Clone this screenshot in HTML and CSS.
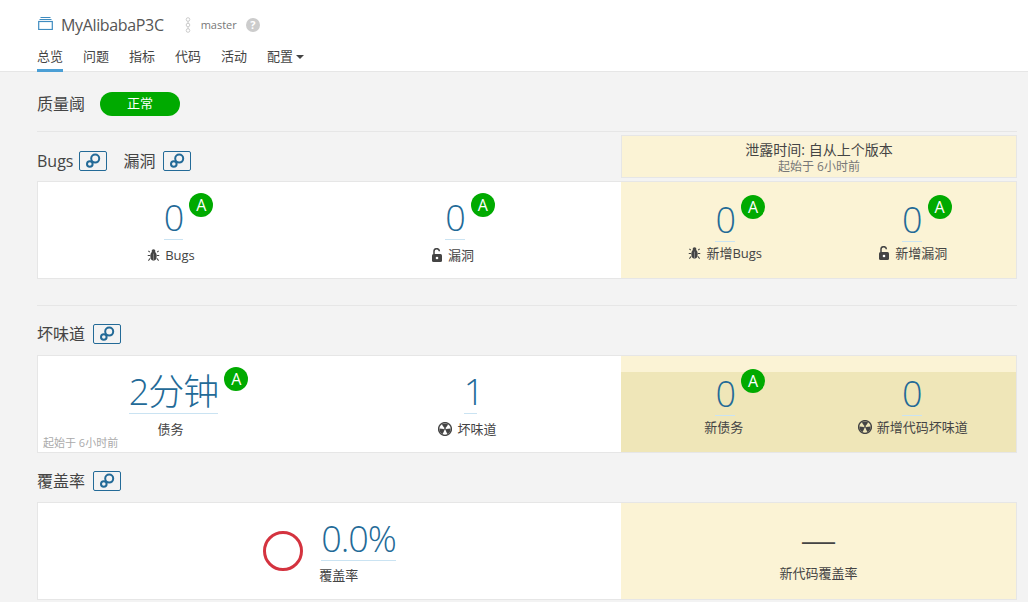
FILE: index.html
```
<!DOCTYPE html>
<html lang="zh">
<head>
<meta charset="utf-8">
<title>MyAlibabaP3C</title>
<link rel="stylesheet" href="styles.css">
</head>
<body>
<svg class="defs" width="0" height="0">
  <symbol id="i-link" viewBox="0 0 16 16"><circle cx="4.8" cy="11" r="2.8" fill="none" stroke="#236a97" stroke-width="2"/><circle cx="10.2" cy="5.6" r="4" fill="none" stroke="#236a97" stroke-width="2"/></symbol>
  <symbol id="i-bug" viewBox="0 0 14 14"><ellipse cx="7" cy="8.2" rx="3.4" ry="5" fill="#444"/><circle cx="7" cy="2.8" r="2" fill="#444"/><path d="M3 4 1.5 2.5M11 4l1.500-1.500M3.500 7.500H.8M10.500 7.500h2.700M3.500 10.500 1.500 13M10.500 10.500l2 2.500M7 5v8" stroke="#444" stroke-width="1.100" fill="none"/><path d="M7 5.500v8" stroke="#fff" stroke-width=".6" opacity=".6"/></symbol>
  <symbol id="i-lock" viewBox="0 0 12 14"><rect x="1" y="6" width="10" height="8" rx="1.500" fill="#444"/><path d="M3 6V3.600a2.700 2.700 0 0 1 5.400-.4" fill="none" stroke="#444" stroke-width="1.500"/><circle cx="6" cy="10" r="1.300" fill="#fff"/></symbol>
  <symbol id="i-rad" viewBox="0 0 14 14"><circle cx="7" cy="7" r="6.400" fill="none" stroke="#444" stroke-width="1.400"/><circle cx="7" cy="7" r="3.400" fill="none" stroke="#444" stroke-width="4.400" pathLength="360" stroke-dasharray="70 50" stroke-dashoffset="-235"/><circle cx="7" cy="7" r="1" fill="#444"/></symbol>
</svg>
<header class="topbar">
  <div class="project">
    <svg class="book" width="15" height="14" viewBox="0 0 15 14"><path d="M2.500 1.500h10M1.500 3.500h12" stroke="#3f8cc0" stroke-width="1" fill="none"/><rect x=".7" y="5.500" width="13.600" height="8" fill="none" stroke="#3f8cc0" stroke-width="1.200"/></svg>
    <span class="project-name">MyAlibabaP3C</span>
    <svg class="branch" width="6" height="16" viewBox="0 0 6 16"><path d="M3 4v3M3 10v2" stroke="#ccc"/><circle cx="3" cy="2.500" r="1.800" fill="none" stroke="#ccc"/><circle cx="3" cy="8" r="1.800" fill="none" stroke="#ccc"/><circle cx="3" cy="13.500" r="1.800" fill="none" stroke="#ccc"/></svg>
    <span class="branch-name">master</span>
    <span class="help">?</span>
  </div>
  <nav class="tabs">
    <a class="tab active">总览</a>
    <a class="tab">问题</a>
    <a class="tab">指标</a>
    <a class="tab">代码</a>
    <a class="tab">活动</a>
    <a class="tab">配置<span class="caret"></span></a>
  </nav>
</header>
<main class="page">
  <div class="gate">
    <h2 class="title">质量阈</h2>
    <span class="gate-ok">正常</span>
  </div>

  <section class="first">
    <div class="head-row">
      <div class="heads">
        <h2 class="title">Bugs</h2><a class="link-btn"><svg width="16" height="16"><use href="#i-link"/></svg></a>
        <h2 class="title second-title">漏洞</h2><a class="link-btn"><svg width="16" height="16"><use href="#i-link"/></svg></a>
      </div>
      <div class="leak-box">
        <div class="leak-main">泄露时间: 自从上个版本</div>
        <div class="leak-sub">起始于 6小时前</div>
      </div>
    </div>
    <div class="card">
      <div class="left cols-a">
        <div class="metric">
          <div class="value">0<span class="badge">A</span></div>
          <div class="label"><svg class="ic" width="13" height="14"><use href="#i-bug"/></svg>Bugs</div>
        </div>
        <div class="metric">
          <div class="value">0<span class="badge">A</span></div>
          <div class="label"><svg class="ic" width="12" height="14"><use href="#i-lock"/></svg>漏洞</div>
        </div>
      </div>
      <div class="right">
        <div class="metric">
          <div class="value">0<span class="badge">A</span></div>
          <div class="label"><svg class="ic" width="13" height="14"><use href="#i-bug"/></svg>新增Bugs</div>
        </div>
        <div class="metric">
          <div class="value">0<span class="badge">A</span></div>
          <div class="label"><svg class="ic" width="12" height="14"><use href="#i-lock"/></svg>新增漏洞</div>
        </div>
      </div>
    </div>
  </section>

  <section class="smells">
    <div class="sec-head">
      <h2 class="title">坏味道</h2><a class="link-btn"><svg width="16" height="16"><use href="#i-link"/></svg></a>
    </div>
    <div class="card">
      <div class="left cols-b">
        <div class="metric">
          <div class="value">2分钟<span class="badge">A</span></div>
          <div class="label">债务</div>
        </div>
        <div class="metric">
          <div class="value value-one">1</div>
          <div class="label"><svg class="ic" width="14" height="14"><use href="#i-rad"/></svg>坏味道</div>
        </div>
        <span class="since">起始于 6小时前</span>
      </div>
      <div class="right band">
        <div class="band-inner">
          <div class="metric">
            <div class="value">0<span class="badge">A</span></div>
            <div class="label label-shift">新债务</div>
          </div>
          <div class="metric">
            <div class="value">0</div>
            <div class="label"><svg class="ic" width="14" height="14"><use href="#i-rad"/></svg>新增代码坏味道</div>
          </div>
        </div>
      </div>
    </div>
  </section>

  <section class="coverage">
    <div class="sec-head">
      <h2 class="title">覆盖率</h2><a class="link-btn"><svg width="16" height="16"><use href="#i-link"/></svg></a>
    </div>
    <div class="card">
      <div class="left cov">
        <svg class="donut" width="40" height="40" viewBox="0 0 40 40"><circle cx="20" cy="20" r="18.500" fill="none" stroke="#d4333f" stroke-width="3"/></svg>
        <div class="metric cov-metric">
          <div class="value">0.0%</div>
          <div class="label">覆盖率</div>
        </div>
      </div>
      <div class="right cov-right">
        <div class="metric">
          <div class="dash">—</div>
          <div class="label">新代码覆盖率</div>
        </div>
      </div>
    </div>
  </section>
</main>
</body>
</html>
```
FILE: styles.css
```
* { box-sizing: border-box; }
html, body { margin: 0; height: 602px; overflow: hidden; }
body {
  background: #f3f3f3;
  color: #444;
  font-family: "Open Sans", "Noto Sans CJK SC", sans-serif;
  font-size: 13px;
}
.defs { position: absolute; }

.topbar {
  height: 72px;
  background: #fff;
  border-bottom: 1px solid #e6e6e6;
  padding: 0 37px;
}
.project { display: flex; align-items: center; height: 49px; }
.book { margin-left: 1px; margin-top: -3px; }
.project-name { margin-left: 8px; font-size: 16px; letter-spacing: -.35px; color: #555; }
.branch { margin-left: 21px; }
.branch-name { margin-left: 10px; font-size: 11px; color: #777; }
.help {
  width: 14px; height: 14px; margin-left: 9px; border-radius: 50%;
  background: #ccc; color: #fff; font-size: 11px; font-weight: 700;
  line-height: 14px; text-align: center;
}
.tabs { display: flex; gap: 20px; height: 22px; }
.tab { position: relative; height: 23px; line-height: 15px; color: #444; white-space: nowrap; }
.tab.active { border-bottom: 3px solid #4b9fd5; }
.caret {
  display: inline-block; margin-left: 3px; vertical-align: 2px;
  border: 4px solid transparent; border-top: 4px solid #444; border-bottom: 0;
}

.page { padding: 0 11px 0 37px; }
.title { display: inline-block; margin: 0; font-size: 16px; font-weight: 400; line-height: 20px; color: #444; }

.gate {
  display: flex; align-items: center; gap: 15px;
  height: 60px; padding-top: 5px;
  border-bottom: 1px solid #e6e6e6;
}
.gate-ok {
  width: 80px; height: 24px; border-radius: 12px;
  background: #00aa00; color: #fff; line-height: 23px; text-align: center;
}

.head-row { display: flex; justify-content: space-between; margin-top: 3px; height: 44px; }
.heads { display: flex; align-items: center; padding-top: 7px; height: 44px; }
.second-title { margin-left: 16px; }
.link-btn {
  display: inline-flex; align-items: center; justify-content: center;
  width: 28px; height: 20px; margin-left: 6px;
  border: 1px solid #236a97; border-radius: 2px;
}
.second-title + .link-btn { margin-left: 8px; }
.leak-box {
  width: 396px; height: 43px; padding-top: 5px;
  background: #fbf3d5; border: 1px solid #e6e6e6; text-align: center;
}
.leak-main { font-size: 14px; line-height: 18px; color: #444; }
.leak-sub { font-size: 12px; line-height: 16px; color: #777; }

.card {
  display: flex; height: 98px; margin-top: 2px;
  background: #fff; border: 1px solid #e6e6e6;
}
.left { position: relative; width: 583px; display: grid; }
.cols-a { grid-template-columns: 271px 292px; }
.cols-b { grid-template-columns: 271px 301px; column-gap: 11px; }
.right {
  width: 395px; padding: 0 11px;
  background: #fbf3d5;
  display: grid; grid-template-columns: 1fr 1fr;
}

.metric { text-align: center; padding-top: 21px; }
.value {
  position: relative; display: inline-block;
  height: 37px; line-height: 29px;
  border-bottom: 1px solid #cae3f2;
  font-size: 36px; font-weight: 300; letter-spacing: -1px; color: #236a97;
}
.value-one { letter-spacing: -7px; }
.badge {
  position: absolute; left: 100%; top: -10px; margin-left: 6px;
  width: 24px; height: 24px; border-radius: 50%;
  background: #00aa00; color: #fff;
  font-size: 16px; font-weight: 400; letter-spacing: 0; line-height: 24px; text-align: center;
}
.label { margin: 6px 5px 0 0; line-height: 18px; white-space: nowrap; }
.ic { margin-right: 5px; vertical-align: -2px; }
.right .metric { padding-top: 23px; }
.right .label { margin: 2px 0 0; }
.right .metric + .metric .label { margin-left: 2px; }
.right .label-shift { margin-right: 3px; }
.cols-b .label { margin-right: 6px; }

.sec-head { display: flex; align-items: center; height: 20px; }
.sec-head .link-btn { margin-left: 8px; }
.smells { margin-top: 26px; border-top: 1px solid #e6e6e6; padding-top: 18px; }
.smells .card { margin-top: 11px; }
.since {
  position: absolute; left: 5px; bottom: 2px;
  font-size: 11px; line-height: 14px; color: #aaa;
}
.band { padding: 16px 0 0; display: block; }
.band-inner {
  display: grid; grid-template-columns: 1fr 1fr; height: 100%;
  padding: 0 11px; background: #efe6b8;
}
.right .band-inner .metric { padding-top: 7px; }

.coverage { margin-top: 18px; }
.coverage .card { margin-top: 11px; }
.cov { display: flex; justify-content: center; align-items: flex-start; }
.donut { margin-top: 28px; }
.cov-metric { margin-left: 18px; text-align: left; }
.cov-metric .label { margin: 5px 0 0 -2px; }
.cov-right { display: flex; justify-content: center; padding: 0; }
.cov-right .metric { padding-top: 18px; }
.dash { font-size: 36px; font-weight: 300; line-height: 38px; color: #444; }
.cov-right .label { margin-top: 5px; }
```
